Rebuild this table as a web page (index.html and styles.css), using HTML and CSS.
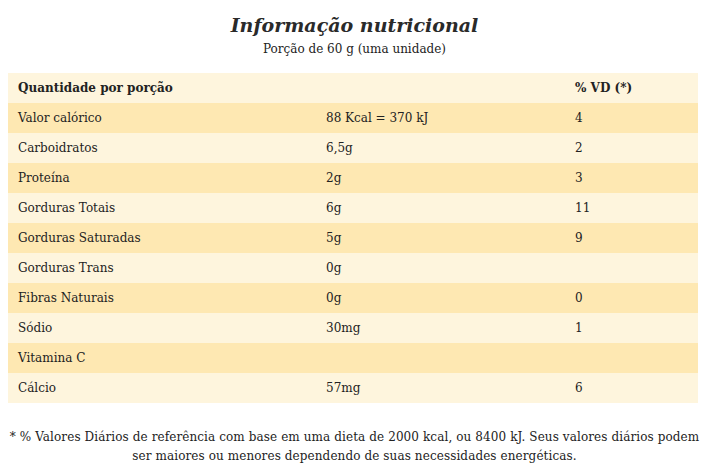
FILE: index.html
```html
<!DOCTYPE html>
<html lang="pt">
<head>
<meta charset="utf-8">
<link rel="stylesheet" href="styles.css">
</head>
<body>
<header class="head">
  <h1 class="title">Informação nutricional</h1>
  <p class="portion">Porção de 60 g (uma unidade)</p>
</header>
<table class="nutri">
  <thead>
    <tr><th class="c1">Quantidade por porção</th><th class="c2"></th><th class="c3">% VD (*)</th></tr>
  </thead>
  <tbody>
    <tr><td>Valor calórico</td><td>88 Kcal = 370 kJ</td><td>4</td></tr>
    <tr><td>Carboidratos</td><td>6,5g</td><td>2</td></tr>
    <tr><td>Proteína</td><td>2g</td><td>3</td></tr>
    <tr><td>Gorduras Totais</td><td>6g</td><td>11</td></tr>
    <tr><td>Gorduras Saturadas</td><td>5g</td><td>9</td></tr>
    <tr><td>Gorduras Trans</td><td>0g</td><td></td></tr>
    <tr><td>Fibras Naturais</td><td>0g</td><td>0</td></tr>
    <tr><td>Sódio</td><td>30mg</td><td>1</td></tr>
    <tr><td>Vitamina C</td><td></td><td></td></tr>
    <tr><td>Cálcio</td><td>57mg</td><td>6</td></tr>
  </tbody>
</table>
<p class="note">* % Valores Diários de referência com base em uma dieta de 2000 kcal, ou 8400 kJ. Seus valores diários podem ser maiores ou menores dependendo de suas necessidades energéticas.</p>
</body>
</html>
```

FILE: styles.css
```css
body {
  margin: 8px;
  font-family: "DejaVu Serif", "Liberation Serif", serif;
  font-size: 12px;
  color: #222;
  background: #fff;
}
.head {
  text-align: center;
  padding-top: 5px;
}
.title {
  margin: 0;
  font-size: 19px;
  font-style: italic;
  font-weight: bold;
  line-height: 24px;
  color: #2a2a2a;
}
.portion {
  margin: 3px 0 0;
  font-size: 12px;
  line-height: 18px;
}
.nutri {
  margin-top: 15px;
  width: 690px;
  border-collapse: collapse;
  table-layout: fixed;
}
.c1 { width: 308px; }
.c2 { width: 249px; }
.c3 { width: 133px; }
.nutri th, .nutri td {
  height: 30px;
  padding: 0 10px;
  text-align: left;
  vertical-align: middle;
  box-sizing: border-box;
}
.nutri th { font-weight: bold; }
.nutri thead tr { background: #fef5dd; }
.nutri tbody tr:nth-child(odd) { background: #fee8b2; }
.nutri tbody tr:nth-child(even) { background: #fef5dd; }
.note {
  margin: 25px 0 0;
  text-align: center;
  line-height: 19px;
  font-size: 12px;
  letter-spacing: 0.1px;
}
```
